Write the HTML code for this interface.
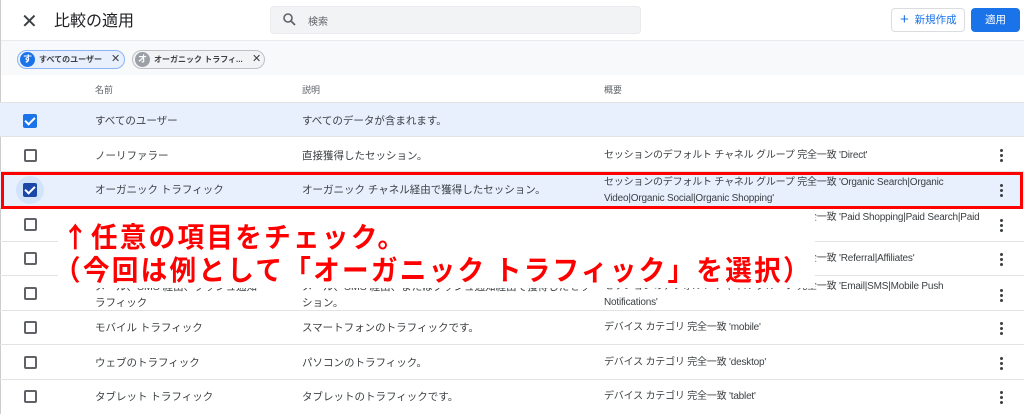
<!DOCTYPE html>
<html><head><meta charset="utf-8"><style>
*{margin:0;padding:0;box-sizing:border-box}
body{width:1024px;height:414px;overflow:hidden;background:#fff;font-family:"Liberation Sans","Noto Sans CJK JP",sans-serif;color:#3c4043;position:relative;font-size:11px}
.a{position:absolute}
.row{position:absolute;left:0;width:1024px;border-bottom:1px solid #e3e3e3}
.cb{position:absolute;left:24px;width:13px;height:13px;border:2px solid #5f6368;border-radius:2px}
.cbk{position:absolute;left:23px;width:14px;height:14px;background:#1a73e8;border-radius:2px}
.cbk:after{content:"";position:absolute;left:4px;top:1px;width:4px;height:8px;border:solid #fff;border-width:0 2px 2px 0;transform:rotate(45deg)}
.t{position:absolute;font-size:10.5px;color:#3c4043;white-space:nowrap;line-height:16px}
.s{font-size:10px;letter-spacing:-0.2px}
.dots{position:absolute;left:1000px;width:3px}
.dots i{display:block;width:3px;height:3px;background:#3c4043;border-radius:50%;margin-bottom:2px}
.red{color:#f00;font-weight:bold;font-size:28px;letter-spacing:2.4px;white-space:nowrap;position:absolute;left:62px;line-height:32px;font-family:"Noto Sans CJK JP",sans-serif;transform:scaleX(0.95);transform-origin:0 0}
</style></head><body>
<div class="a" style="left:0;top:0;width:1px;height:414px;background:#ccc"></div>
<div class="a" style="left:21px;top:9px;font-size:20px;color:#3c4043">✕</div>
<div class="a" style="left:54px;top:7px;font-size:16px;color:#202124">比較の適用</div>
<div class="a" style="left:270px;top:6px;width:371px;height:28px;background:#f1f3f4;border:1px solid #e8eaed;border-radius:4px"></div>
<svg class="a" style="left:283px;top:13px" width="13" height="13" viewBox="0 0 13 13"><circle cx="5" cy="5" r="4" stroke="#5f6368" stroke-width="1.6" fill="none"/><path d="M8 8L12 12" stroke="#5f6368" stroke-width="1.8"/></svg>
<div class="a" style="left:308px;top:13px;font-size:10px;color:#5f6368">検索</div>
<div class="a" style="left:891px;top:8px;width:74px;height:24px;border:1px solid #dadce0;border-radius:4px;color:#1a73e8;font-size:10.5px;line-height:22px;padding-left:8px"><span style="font-size:15px;vertical-align:-1px">+</span>&nbsp; 新規作成</div>
<div class="a" style="left:971px;top:8px;width:49px;height:24px;background:#1a73e8;border-radius:4px;color:#fff;font-size:10.5px;line-height:24px;text-align:center">適用</div>
<div class="a" style="left:1px;top:40px;width:1023px;height:35px;background:#f8f9fa;border-top:1px solid #e8eaed"></div>
<div class="a" style="left:17px;top:50px;width:108px;height:19px;border:1px solid #8ab4f8;background:#e8f0fe;border-radius:10px"></div>
<div class="a" style="left:20px;top:52px;width:15px;height:15px;border-radius:50%;background:#1a73e8;color:#fff;font-size:9px;text-align:center;line-height:15px;font-weight:bold">す</div>
<div class="a" style="left:39px;top:54px;font-size:8px;font-weight:bold;color:#3c4043">すべてのユーザー</div>
<div class="a" style="left:111px;top:52px;font-size:11px;color:#3c4043">✕</div>
<div class="a" style="left:132px;top:50px;width:133px;height:19px;border:1px solid #bdc1c6;background:#f1f3f4;border-radius:10px"></div>
<div class="a" style="left:135px;top:52px;width:15px;height:15px;border-radius:50%;background:#9aa0a6;color:#fff;font-size:9px;text-align:center;line-height:15px;font-weight:bold">オ</div>
<div class="a" style="left:154px;top:54px;font-size:8px;font-weight:bold;color:#3c4043">オーガニック トラフィ...</div>
<div class="a" style="left:252px;top:52px;font-size:11px;color:#3c4043">✕</div>
<div class="row" style="top:75px;height:28px"></div>
<div class="t" style="left:95px;top:82px;font-size:9px;color:#5f6368">名前</div>
<div class="t" style="left:302px;top:82px;font-size:9px;color:#5f6368">説明</div>
<div class="t" style="left:604px;top:82px;font-size:9px;color:#5f6368">概要</div>

<div class="row" style="top:103px;height:34px;background:#e8f0fe"></div>
<div class="cbk" style="top:114px"></div>
<div class="t" style="left:95px;top:113px">すべてのユーザー</div>
<div class="t" style="left:302px;top:113px">すべてのデータが含まれます。</div>

<div class="row" style="top:137px;height:35px"></div>
<div class="cb" style="top:149px"></div>
<div class="t" style="left:95px;top:148px">ノーリファラー</div>
<div class="t" style="left:302px;top:148px">直接獲得したセッション。</div>
<div class="t s" style="left:604px;top:148px">セッションのデフォルト チャネル グループ 完全一致 'Direct'</div>
<div class="dots" style="top:149px"><i></i><i></i><i></i></div>

<div class="row" style="top:172px;height:36px;background:#e8f0fe"></div>
<div class="a" style="left:16px;top:176px;width:28px;height:28px;border-radius:50%;background:#d2e3fc"></div>
<div class="cbk" style="top:183px;background:#1a47a8"></div>
<div class="t" style="left:95px;top:182px">オーガニック トラフィック</div>
<div class="t" style="left:302px;top:182px">オーガニック チャネル経由で獲得したセッション。</div>
<div class="t s" style="left:604px;top:175px">セッションのデフォルト チャネル グループ 完全一致 'Organic Search|Organic<br>Video|Organic Social|Organic Shopping'</div>
<div class="dots" style="top:184px"><i></i><i></i><i></i></div>
<div class="a" style="left:1px;top:172px;width:1022px;height:37px;border:3px solid #f00"></div>

<div class="row" style="top:208px;height:34px"></div>
<div class="cb" style="top:218px"></div>
<div class="t s" style="left:604px;top:210px">セッションのデフォルト チャネル グループ 完全一致 'Paid Shopping|Paid Search|Paid<br>Other|Paid Video|Cross-network|Display|Audio'</div>
<div class="dots" style="top:219px"><i></i><i></i><i></i></div>

<div class="row" style="top:242px;height:34px"></div>
<div class="cb" style="top:252px"></div>
<div class="t s" style="left:604px;top:251px">セッションのデフォルト チャネル グループ 完全一致 'Referral|Affiliates'</div>
<div class="dots" style="top:253px"><i></i><i></i><i></i></div>

<div class="row" style="top:276px;height:35px"></div>
<div class="cb" style="top:287px"></div>
<div class="t" style="left:95px;top:279px">メール、SMS 経由、プッシュ通知<br>ラフィック</div>
<div class="t" style="left:302px;top:279px">メール、SMS 経由、またはプッシュ通知経由で獲得したセッ<br>ション。</div>
<div class="t s" style="left:604px;top:279px">セッションのデフォルト チャネル グループ 完全一致 'Email|SMS|Mobile Push<br>Notifications'</div>
<div class="dots" style="top:289px"><i></i><i></i><i></i></div>

<div class="row" style="top:311px;height:34px"></div>
<div class="cb" style="top:321px"></div>
<div class="t" style="left:95px;top:320px">モバイル トラフィック</div>
<div class="t" style="left:302px;top:320px">スマートフォンのトラフィックです。</div>
<div class="t s" style="left:604px;top:320px">デバイス カテゴリ 完全一致 'mobile'</div>
<div class="dots" style="top:322px"><i></i><i></i><i></i></div>

<div class="row" style="top:345px;height:35px"></div>
<div class="cb" style="top:356px"></div>
<div class="t" style="left:95px;top:355px">ウェブのトラフィック</div>
<div class="t" style="left:302px;top:355px">パソコンのトラフィック。</div>
<div class="t s" style="left:604px;top:355px">デバイス カテゴリ 完全一致 'desktop'</div>
<div class="dots" style="top:357px"><i></i><i></i><i></i></div>

<div class="row" style="top:380px;height:34px;border-bottom:none"></div>
<div class="cb" style="top:390px"></div>
<div class="t" style="left:95px;top:389px">タブレット トラフィック</div>
<div class="t" style="left:302px;top:389px">タブレットのトラフィックです。</div>
<div class="t s" style="left:604px;top:389px">デバイス カテゴリ 完全一致 'tablet'</div>
<div class="dots" style="top:391px"><i></i><i></i><i></i></div>

<div class="a" style="left:58px;top:211px;width:757px;height:77px;background:#fff"></div>
<div class="red" style="top:220px">↑任意の項目をチェック。</div>
<div class="red" style="top:253px;left:54px">（今回は例として「オーガニック トラフィック」を選択）</div>
</body></html>
